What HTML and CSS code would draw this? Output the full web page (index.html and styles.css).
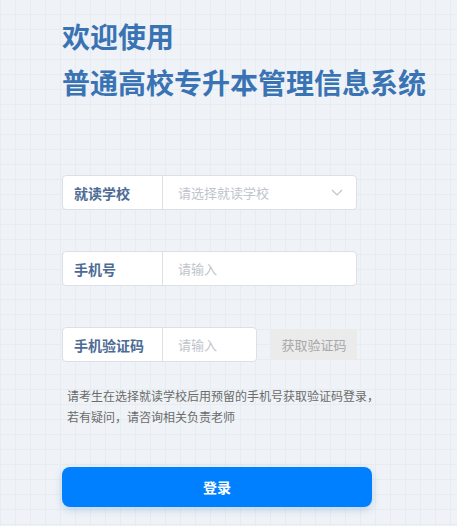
FILE: index.html
```html
<!DOCTYPE html>
<html lang="zh-CN">
<head>
    <meta charset="UTF-8">
    <title>普通高校专升本管理信息系统</title>
    <link rel="stylesheet" href="styles.css">
</head>
<body>
<div class="page">
    <h1 class="title">
        <span>欢迎使用</span>
        <span>普通高校专升本管理信息系统</span>
    </h1>

    <div class="form">
        <div class="row">
            <div class="field field-wide">
                <label class="label">就读学校</label>
                <div class="control">
                    <span class="placeholder">请选择就读学校</span>
                    <svg class="arrow" width="12" height="7" viewBox="0 0 12 7">
                        <path d="M1 1 L6 6 L11 1" fill="none" stroke="#c0c4cc" stroke-width="1.2"/>
                    </svg>
                </div>
            </div>
        </div>
        <div class="row">
            <div class="field field-wide">
                <label class="label">手机号</label>
                <div class="control"><span class="placeholder">请输入</span></div>
            </div>
        </div>
        <div class="row">
            <div class="field field-short">
                <label class="label">手机验证码</label>
                <div class="control"><span class="placeholder">请输入</span></div>
            </div>
            <button class="code-btn">获取验证码</button>
        </div>
    </div>

    <p class="tip">请考生在选择就读学校后用预留的手机号获取验证码登录，<br>若有疑问，请咨询相关负责老师</p>

    <button class="login-btn">登录</button>
</div>
</body>
</html>
```

FILE: styles.css
```css
* {
    margin: 0;
    padding: 0;
    box-sizing: border-box;
}
html, body {
    height: 100%;
}
body {
    font-family: "Noto Sans CJK SC", "Noto Sans", sans-serif;
    background-color: #eff3f7;
    background-image:
        linear-gradient(#e7ecf1 1px, transparent 1px),
        linear-gradient(90deg, #e7ecf1 1px, transparent 1px);
    background-size: 15px 15px;
    background-position: 0 14px, 0 0;
}
.page {
    padding: 13px 0 0 62px;
}
.title {
    display: flex;
    flex-direction: column;
    font-size: 28px;
    line-height: 46px;
    font-weight: bold;
    color: #3a73b4;
}
.form {
    margin-top: 70px;
    display: flex;
    flex-direction: column;
    gap: 41px;
}
.row {
    display: flex;
    align-items: center;
    gap: 14px;
    height: 35px;
}
.field {
    display: flex;
    height: 35px;
    background: #fff;
    border: 1px solid #dcdfe6;
    border-radius: 4px;
}
.field-wide {
    width: 295px;
}
.field-short {
    width: 195px;
}
.label {
    width: 100px;
    flex: none;
    display: flex;
    align-items: center;
    padding-left: 11px;
    border-right: 1px solid #dcdfe6;
    font-size: 14px;
    font-weight: bold;
    color: #4d6b94;
}
.control {
    flex: 1;
    display: flex;
    align-items: center;
    justify-content: space-between;
    padding: 0 13px 0 15px;
}
.placeholder {
    font-size: 13px;
    color: #c0c4cc;
}
.arrow {
    display: block;
}
.code-btn {
    width: 86px;
    height: 31px;
    border: none;
    border-radius: 3px;
    background: #ebebeb;
    color: #a8a8a8;
    font-family: inherit;
    font-size: 13px;
}
.tip {
    margin: 23px 0 0 5px;
    font-size: 12px;
    line-height: 21px;
    color: #6b6b6b;
}
.login-btn {
    display: block;
    margin-top: 40px;
    width: 310px;
    height: 40px;
    border: none;
    border-radius: 8px;
    background: #0080ff;
    color: #fff;
    font-family: inherit;
    font-size: 14px;
    font-weight: bold;
    box-shadow: 0 3px 8px rgba(0, 80, 160, 0.2);
}
```
